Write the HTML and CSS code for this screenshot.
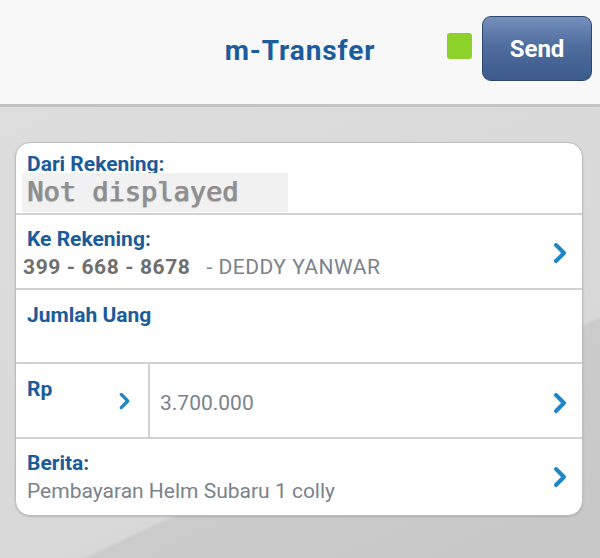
FILE: index.html
```html
<!DOCTYPE html>
<html>
<head>
<meta charset="utf-8">
<link rel="stylesheet" href="styles.css">
</head>
<body>
<header class="topbar">
  <div class="spacer"></div>
  <h1 class="title">m-Transfer</h1>
  <div class="actions">
    <span class="status"></span>
    <button class="send">Send</button>
  </div>
</header>
<main class="page">
  <section class="card">
    <div class="row row-from">
      <div class="label">Dari Rekening:</div>
      <div class="masked">Not displayed</div>
    </div>
    <div class="row row-link">
      <div class="content">
        <div class="label">Ke Rekening:</div>
        <div class="value"><span class="acct">399 - 668 - 8678</span><span class="name">- DEDDY YANWAR</span></div>
      </div>
      <svg class="chev" viewBox="0 0 16 22"><path d="M4 3 L12 11 L4 19"/></svg>
    </div>
    <div class="row row-amount-head">
      <div class="label">Jumlah Uang</div>
    </div>
    <div class="row row-amount">
      <div class="currency">
        <div class="label">Rp</div>
        <svg class="chev chev-small" viewBox="0 0 16 22"><path d="M4 3 L12 11 L4 19"/></svg>
      </div>
      <div class="amount">
        <div class="value">3.700.000</div>
        <svg class="chev" viewBox="0 0 16 22"><path d="M4 3 L12 11 L4 19"/></svg>
      </div>
    </div>
    <div class="row row-link row-last">
      <div class="content">
        <div class="label">Berita:</div>
        <div class="value">Pembayaran Helm Subaru 1 colly</div>
      </div>
      <svg class="chev" viewBox="0 0 16 22"><path d="M4 3 L12 11 L4 19"/></svg>
    </div>
  </section>
</main>
</body>
</html>
```
FILE: styles.css
```css
html, body {
  margin: 0;
  padding: 0;
}
body {
  width: 600px;
  height: 558px;
  overflow: hidden;
  font-family: Roboto, "Liberation Sans", sans-serif;
  background: linear-gradient(155deg, #dedede 0%, #d8d8d8 71%, #cbcbcb 71.6%, #c7c7c7 100%);
}
.topbar {
  height: 104px;
  background: #f8f8f8;
  border-bottom: 3px solid #c4c4c4;
  display: grid;
  grid-template-columns: 1fr auto 1fr;
  align-items: center;
}
.title {
  margin: 0 0 4px;
  font-size: 28px;
  font-weight: 700;
  color: #1b5c9d;
  letter-spacing: 0.9px;
}
.actions {
  display: flex;
  justify-content: flex-end;
  align-items: center;
  gap: 10px;
  padding-right: 8px;
  padding-bottom: 7px;
}
.status {
  width: 25px;
  height: 26px;
  border-radius: 3px;
  background: #8fd12b;
  margin-bottom: 6px;
}
.send {
  width: 110px;
  height: 65px;
  border-radius: 9px;
  border: 1.5px solid #2c4770;
  background: linear-gradient(180deg, #7590bb 0%, #4f6e9e 45%, #3b5b8c 100%);
  color: #fff;
  font-family: Roboto, "Liberation Sans", sans-serif;
  font-weight: 700;
  font-size: 24px;
  padding: 0;
}
.page {
  padding: 35px 17px 0 15px;
}
.card {
  background: #fff;
  border: 1.5px solid #bdbdbd;
  border-radius: 15px;
  box-shadow: 0 1px 2px rgba(0,0,0,0.15);
  overflow: hidden;
}
.row {
  border-bottom: 2px solid #d2d2d2;
  box-sizing: border-box;
}
.row-last { border-bottom: none; }
.label {
  font-size: 21px;
  font-weight: 700;
  color: #1a5b9a;
  line-height: 24px;
}
.value {
  font-size: 21px;
  color: #7a838c;
  line-height: 24px;
  white-space: nowrap;
}
.row-from {
  height: 72px;
  padding: 9px 0 0 11px;
}
.masked {
  position: relative;
  margin: -3px 0 0 -5px;
  width: 266px;
  height: 39px;
  box-sizing: border-box;
  padding: 2px 0 0 5px;
  background: #f1f1f1;
  font-family: "DejaVu Sans Mono", "Liberation Mono", monospace;
  font-weight: 400;
  font-size: 27px;
  line-height: 34px;
  color: #8e8e8e;
  text-shadow: 1px 0 0 #9a9a9a, 0 1px 1px #b5b5b5;
}
.row-link {
  display: flex;
  align-items: center;
  height: 75px;
  padding: 2px 14px 0 11px;
}
.row-link .content { flex: 1; }
.row-last { height: 76px; padding-top: 0; }
.row-link .label { margin-bottom: 4px; }
.acct {
  display: inline-block;
  background: #fff;
  margin-left: -17px;
  padding: 0 11px 0 13px;
  font-weight: 700;
  color: #6f6f6f;
  letter-spacing: 0.6px;
}
.name {
  letter-spacing: 0.5px;
  margin-left: 5px;
}
.chev {
  width: 16px;
  height: 22px;
  flex: none;
}
.chev path {
  fill: none;
  stroke: #1e86c6;
  stroke-width: 4;
  stroke-linecap: round;
  stroke-linejoin: round;
}
.row-amount-head {
  height: 74px;
  padding: 13px 0 0 11px;
}
.row-amount {
  height: 75px;
  display: flex;
}
.currency {
  width: 134px;
  border-right: 2px solid #d2d2d2;
  display: flex;
  justify-content: space-between;
  padding: 13px 16px 0 11px;
  box-sizing: border-box;
}
.chev-small {
  margin-top: 15px;
  width: 15px;
  height: 18px;
}
.amount {
  flex: 1;
  display: flex;
  justify-content: space-between;
  align-items: center;
  padding: 5px 14px 0 10px;
}
```
